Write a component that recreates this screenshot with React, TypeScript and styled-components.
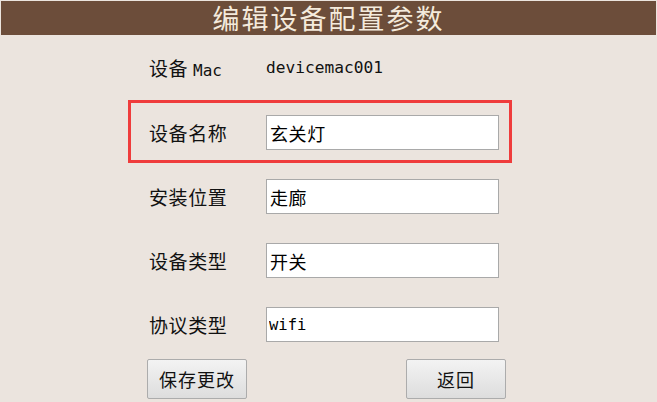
import React from "react";
import styled, { createGlobalStyle } from "styled-components";

const Global = createGlobalStyle`
  html, body {
    margin: 0;
    padding: 0;
    background: #ebe4de;
  }
  body {
    font-family: "Noto Sans CJK SC", "Noto Sans", sans-serif;
    color: #111;
  }
`;

const Page = styled.div`
  width: 657px;
  height: 402px;
  box-sizing: border-box;
  padding: 1px;
  background: #ebe4de;
  display: flex;
  flex-direction: column;
  overflow: hidden;
`;

const TitleBar = styled.div`
  height: 34px;
  flex: none;
  background: #6c4d3a;
  display: flex;
  align-items: center;
  justify-content: center;
  color: #f4eadc;
  font-family: "Noto Sans CJK SC", sans-serif;
  font-size: 27px;
  letter-spacing: 2px;
  line-height: 34px;
  white-space: nowrap;
`;

const Form = styled.div`
  margin-top: 16px;
  margin-left: 148px;
  width: 350px;
  display: flex;
  flex-direction: column;
  gap: 29px;
`;

const Row = styled.div`
  position: relative;
  height: 35px;
  display: grid;
  grid-template-columns: 117px 233px;
  align-items: center;
`;

const Highlight = styled.div`
  position: absolute;
  top: -15px;
  bottom: -13px;
  left: -21px;
  right: -13px;
  border: 3px solid #ef3c3c;
  pointer-events: none;
`;

const Label = styled.span`
  font-size: 19px;
  letter-spacing: 0.6px;
  line-height: 1;
  white-space: nowrap;
`;

const Latin = styled.span`
  font-family: "DejaVu Sans Mono", monospace;
  font-size: 16px;
  letter-spacing: 0;
`;

const Value = styled.span`
  font-family: "DejaVu Sans Mono", monospace;
  font-size: 16.2px;
  line-height: 1;
  color: #111;
`;

const Field = styled.input<{ $mono?: boolean }>`
  box-sizing: border-box;
  width: 233px;
  height: 35px;
  margin: 0;
  border: 1px solid #a9a9a9;
  background: #fff;
  padding: 0 0 0 ${(p) => (p.$mono ? "2px" : "3px")};
  font-family: ${(p) =>
    p.$mono ? `"DejaVu Sans Mono", monospace` : `"Noto Sans CJK SC", sans-serif`};
  font-size: ${(p) => (p.$mono ? "15.5px" : "18px")};
  letter-spacing: ${(p) => (p.$mono ? "0" : "0.6px")};
  color: #000;
  outline: none;
`;

const Buttons = styled.div`
  margin-top: 17px;
  margin-left: 146px;
  display: flex;
  gap: 159px;
`;

const Button = styled.button`
  box-sizing: border-box;
  width: 100px;
  height: 40px;
  margin: 0;
  padding: 0;
  border: 1px solid #acacac;
  border-radius: 2px;
  background: linear-gradient(#f3f3f3, #dddddd);
  font-family: "Noto Sans CJK SC", sans-serif;
  font-size: 18px;
  letter-spacing: 1px;
  color: #111;
  line-height: 1;
  cursor: pointer;
`;

type Item = { label: string; value: string; mono?: boolean; highlight?: boolean };

const items: Item[] = [
  { label: "设备名称", value: "玄关灯", highlight: true },
  { label: "安装位置", value: "走廊" },
  { label: "设备类型", value: "开关" },
  { label: "协议类型", value: "wifi", mono: true },
];

export default function App() {
  return (
    <>
      <Global />
      <Page>
        <TitleBar>编辑设备配置参数</TitleBar>
        <Form>
          <Row>
            <Label>
              设备 <Latin>Mac</Latin>
            </Label>
            <Value>devicemac001</Value>
          </Row>
          {items.map((it) => (
            <Row key={it.label}>
              {it.highlight && <Highlight />}
              <Label>{it.label}</Label>
              <Field $mono={it.mono} defaultValue={it.value} />
            </Row>
          ))}
        </Form>
        <Buttons>
          <Button>保存更改</Button>
          <Button>返回</Button>
        </Buttons>
      </Page>
    </>
  );
}
